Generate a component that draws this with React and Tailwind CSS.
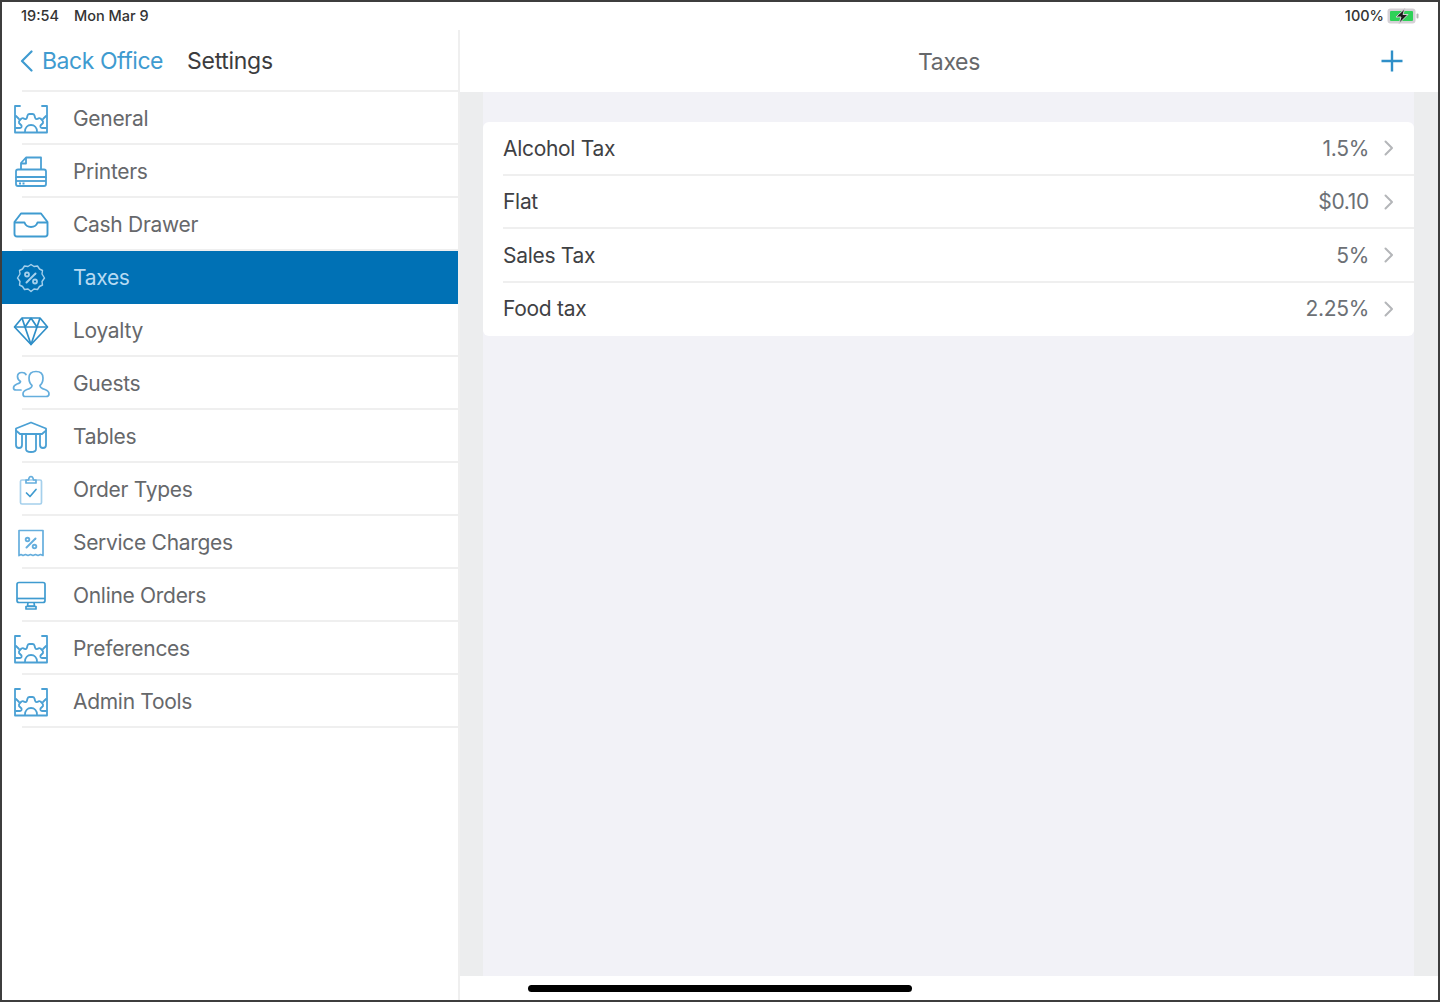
const Gear = () => (
  <svg width="36" height="30" viewBox="0 0 36 30" fill="none" stroke="#4aa0d4" strokeWidth="1.800" strokeLinejoin="round" strokeLinecap="round">
    <path d="M7 2H2V28.500H34V2H29" />
    <path d="M12 27.500C12 23.500 14.500 21 18 21C21.500 21 24 23.500 24 27.500" />
    <path d="M3 24H7Q9 24 8.500 21.500L6 19Q5.500 17.500 7 16L8.500 14.500Q10 13.500 11.500 15Q13.500 15.500 14 13.500L14.500 11.500Q15 10 16.500 10H19.500Q21 10 21.500 11.500L22 13.500Q22.500 15.500 24.500 15Q26 13.500 27.500 14.500L29 16Q30.500 17.500 30 19L27.500 21.500Q27 24 29 24H33" />
    <path d="M3 12L6 15M33 12L30 15" />
  </svg>
);
const Printer = () => (
  <svg width="34" height="32" viewBox="0 0 34 32" fill="none" stroke="#4aa0d4" strokeWidth="1.800" strokeLinejoin="round">
    <path d="M7 13V7L12 1.500H27V13" />
    <path d="M7 7.500H12V2" />
    <path d="M4 13.500H30Q32 13.500 32 15.500V21H2V15.500Q2 13.500 4 13.500Z" />
    <path d="M2 21V28Q2 30 4 30H30Q32 30 32 28V21" />
    <path d="M2 25H32" />
    <path d="M5 27.500H12" strokeDasharray="2 1.500" />
  </svg>
);
const Drawer = () => (
  <svg width="36" height="26" viewBox="0 0 36 26" fill="none" stroke="#3f9bd0" strokeWidth="1.900" strokeLinejoin="round">
    <path d="M8 1.500H28L34.500 10V22Q34.500 24.500 32 24.500H4Q1.500 24.500 1.500 22V10Z" />
    <path d="M1.500 10.500H11.500Q13 15 18 15Q23 15 24.500 10.500H34.500" />
  </svg>
);
const Tax = () => (
  <svg width="30" height="30" viewBox="0 0 30 30" fill="none" stroke="#a5d0ec" strokeWidth="1.400" strokeLinejoin="round" strokeLinecap="round">
    <path d="M15 1.500L18 3.500L21.500 3L23.500 6L26.500 7.500L26 11L28.500 15L26 18.500L26.500 22L23.500 23.500L21.500 26.500L18 26L15 28.500L12 26L8.500 26.500L6.500 23.500L3.500 22L4 18.500L1.500 15L4 11L3.500 7.500L6.500 6L8.500 3L12 3.500Z" />
    <path d="M10.500 19.500L19.500 10.500" strokeWidth="2" />
    <circle cx="11" cy="11.500" r="2" strokeWidth="1.800" />
    <circle cx="19" cy="18.500" r="2" strokeWidth="1.800" />
  </svg>
);
const Diamond = () => (
  <svg width="36" height="30" viewBox="0 0 36 30" fill="none" stroke="#2f8fc8" strokeWidth="1.700" strokeLinejoin="round">
    <path d="M9 2H27L34.500 11L18 28.500L1.500 11Z" />
    <path d="M1.500 11H34.500M12 11L18 28.500L24 11" />
    <path d="M18 2L12 11L9 2M18 2L24 11L27 2" />
  </svg>
);
const Guests = () => (
  <svg width="38" height="28" viewBox="0 0 38 28" fill="none" stroke="#65aedd" strokeWidth="1.700" strokeLinejoin="round" strokeLinecap="round">
    <path d="M9 20H4Q1.500 20 1.500 18Q1.500 15.500 5 14Q8.500 13 8.500 11.500Q5.500 9.500 5.500 6.500Q5.500 2.500 10 2.500Q13 2.500 14 4.500" />
    <path d="M13 26.500H34Q37 26.500 37 24Q37 21 33 19.500Q28 18 28 15.500Q31 13 31 8Q31 1.500 24 1.500Q17 1.500 17 8Q17 13 20 15.500Q20 18 15 19.500Q11 21 11 24Q11 26.500 13 26.500Z" />
  </svg>
);
const TableIcon = () => (
  <svg width="34" height="32" viewBox="0 0 34 32" fill="none" stroke="#4aa0d4" strokeWidth="1.800" strokeLinejoin="round" strokeLinecap="round">
    <path d="M17 1.500L32 7.500V9.500L28 13H6L2 9.500V7.500Z" />
    <path d="M2 9.500V24Q2 27 5 27Q8 27 8 24V13" />
    <path d="M32 9.500V24Q32 27 29 27Q26 27 26 24V13" />
    <path d="M12 13V28Q12 31 17 31Q22 31 22 28V13" />
  </svg>
);
const Clipboard = () => (
  <svg width="24" height="30" viewBox="0 0 24 30" fill="none" stroke="#a5d0ec" strokeWidth="1.700" strokeLinejoin="round" strokeLinecap="round">
    <rect x="1.500" y="5" width="21" height="24" rx="1.500" />
    <path d="M7 8V5H9.500Q10 1.500 12 1.500Q14 1.500 14.500 5H17V8Z" stroke="#65aedd" />
    <path d="M7.500 18L11 21.500L17 14.500" stroke="#3f9bd0" />
  </svg>
);
const Percent = () => (
  <svg width="28" height="30" viewBox="0 0 28 30" fill="none" stroke="#65aedd" strokeWidth="1.700" strokeLinejoin="round" strokeLinecap="round">
    <path d="M2 2.500H26V27.500L23.500 26.500L21 27.500L18.500 26.500L16 27.500L13.500 26.500L11 27.500L8.500 26.500L6 27.500L4 26.500L2 27.500Z" />
    <path d="M9.500 19.500L18.500 10.500" strokeWidth="2" />
    <circle cx="10.500" cy="11.500" r="1.800" strokeWidth="1.900" />
    <circle cx="17.500" cy="18.500" r="1.800" strokeWidth="1.900" />
  </svg>
);
const Monitor = () => (
  <svg width="30" height="30" viewBox="0 0 30 30" fill="none" stroke="#3f9bd0" strokeWidth="1.700" strokeLinejoin="round">
    <rect x="1" y="1.500" width="28" height="20" rx="2" />
    <path d="M1 17.500H29" />
    <path d="M12 21.500L11.500 25H18.500L18 21.500" />
    <path d="M10 28H20V25.500H10Z" />
  </svg>
);

const icons = { Gear, Printer, Drawer, Tax, Diamond, Guests, TableIcon, Clipboard, Percent, Monitor };

const menu = [
  ["General", "Gear"],
  ["Printers", "Printer"],
  ["Cash Drawer", "Drawer"],
  ["Taxes", "Tax"],
  ["Loyalty", "Diamond"],
  ["Guests", "Guests"],
  ["Tables", "TableIcon"],
  ["Order Types", "Clipboard"],
  ["Service Charges", "Percent"],
  ["Online Orders", "Monitor"],
  ["Preferences", "Gear"],
  ["Admin Tools", "Gear"],
];

const taxes = [
  ["Alcohol Tax", "1.5%"],
  ["Flat", "$0.10"],
  ["Sales Tax", "5%"],
  ["Food tax", "2.25%"],
];

function MenuRow({ label, icon, active }) {
  const Icon = icons[icon];
  return (
    <div className={`relative flex h-[53px] items-center ${active ? "bg-[#0071b5]" : ""}`}>
      <div className="flex w-[58px] shrink-0 justify-center">
        <Icon />
      </div>
      <span className={`ml-[13px] text-[21px] tracking-[-0.3px] ${active ? "text-[#b6daf2]" : "text-[#66686b]"}`}>
        {label}
      </span>
      {!active && <div className="absolute right-0 bottom-0 left-[20px] h-[2px] bg-[#efefef]" />}
    </div>
  );
}

function TaxRow({ name, value, last }) {
  return (
    <div className="relative flex h-[53.500px] items-center pr-[20px] pb-[1px] pl-[20px]">
      <span className="text-[21px] tracking-[-0.3px] text-[#3f4144]">{name}</span>
      <span className="ml-auto text-[21px] tracking-[-0.3px] text-[#6c7075]">{value}</span>
      <svg className="ml-[15px]" width="10" height="16" viewBox="0 0 10 16" fill="none" stroke="#b4b6b9" strokeWidth="2" strokeLinecap="round" strokeLinejoin="round">
        <path d="M1.500 1.500L8 8L1.500 14.500" />
      </svg>
      {!last && <div className="absolute right-0 bottom-0 left-[20px] h-[2px] bg-[#efefef]" />}
    </div>
  );
}

export default function App() {
  return (
    <div className="flex h-[1002px] w-[1440px] flex-col overflow-hidden border-2 border-[#3d3d3d] bg-white font-['Inter','Liberation_Sans',sans-serif]">
      <div className="flex h-[28px] shrink-0 items-center pr-[18px] pl-[19px] text-[14.500px] font-medium text-[#333]">
        <span>19:54</span>
        <span className="ml-[15px]">Mon Mar 9</span>
        <span className="ml-auto">100%</span>
        <svg className="ml-[3px]" width="33" height="16" viewBox="0 0 33 16">
          <rect x="0.500" y="0.500" width="28" height="15" rx="3" fill="#d5d1d6" />
          <rect x="3" y="3" width="23" height="10" rx="1" fill="#2fd158" />
          <rect x="29.500" y="5.500" width="2" height="5" rx="1" fill="#b5b5b5" />
          <path d="M18 0.500L9 9H14L12 15.500L21 6.500H16Z" fill="#1c1c1c" stroke="#d5d1d6" strokeWidth="1" />
        </svg>
      </div>
      <div className="flex min-h-0 flex-1">
        <aside className="flex w-[456px] shrink-0 flex-col">
          <div className="relative flex h-[62px] shrink-0 items-center">
            <svg className="ml-[18px]" width="14" height="22" viewBox="0 0 14 22" fill="none" stroke="#3f9bd0" strokeWidth="2.200" strokeLinecap="round" strokeLinejoin="round">
              <path d="M11.500 1.500L2 11L11.500 20.500" />
            </svg>
            <span className="ml-[8px] text-[23px] tracking-[-0.45px] text-[#3f9bd0]">Back Office</span>
            <span className="ml-[24px] text-[23px] tracking-[-0.3px] text-[#3c3c3e]">Settings</span>
            <div className="absolute right-0 bottom-0 left-[20px] h-[2px] bg-[#efefef]" />
          </div>
          <nav className="flex flex-col">
            {menu.map(([label, icon]) => (
              <MenuRow key={label} label={label} icon={icon} active={label === "Taxes"} />
            ))}
          </nav>
        </aside>
        <main className="flex min-w-0 flex-1 flex-col border-l-2 border-[#efefef]">
          <div className="relative flex h-[62px] shrink-0 items-center justify-center">
            <span className="translate-y-px text-[23px] tracking-[-0.3px] text-[#66686b]">Taxes</span>
            <svg className="absolute right-[34px]" width="24" height="24" viewBox="0 0 24 24" fill="none" stroke="#2f8fc8" strokeWidth="2.400">
              <path d="M12 1.500V22.500M1.500 12H22.500" />
            </svg>
          </div>
          <div className="flex min-h-0 flex-1 bg-[#ecedee] pr-[24px] pl-[23px]">
            <div className="flex-1 bg-[#f2f2f7] pt-[30px]">
              <div className="rounded-[6px] bg-white">
                {taxes.map(([n, v], i) => (
                  <TaxRow key={n} name={n} value={v} last={i === taxes.length - 1} />
                ))}
              </div>
            </div>
          </div>
          <div className="h-[24px] shrink-0" />
        </main>
      </div>
      <div className="relative h-0 shrink-0">
        <div className="absolute bottom-[8px] left-[526px] h-[7px] w-[384px] rounded-full bg-black" />
      </div>
    </div>
  );
}
